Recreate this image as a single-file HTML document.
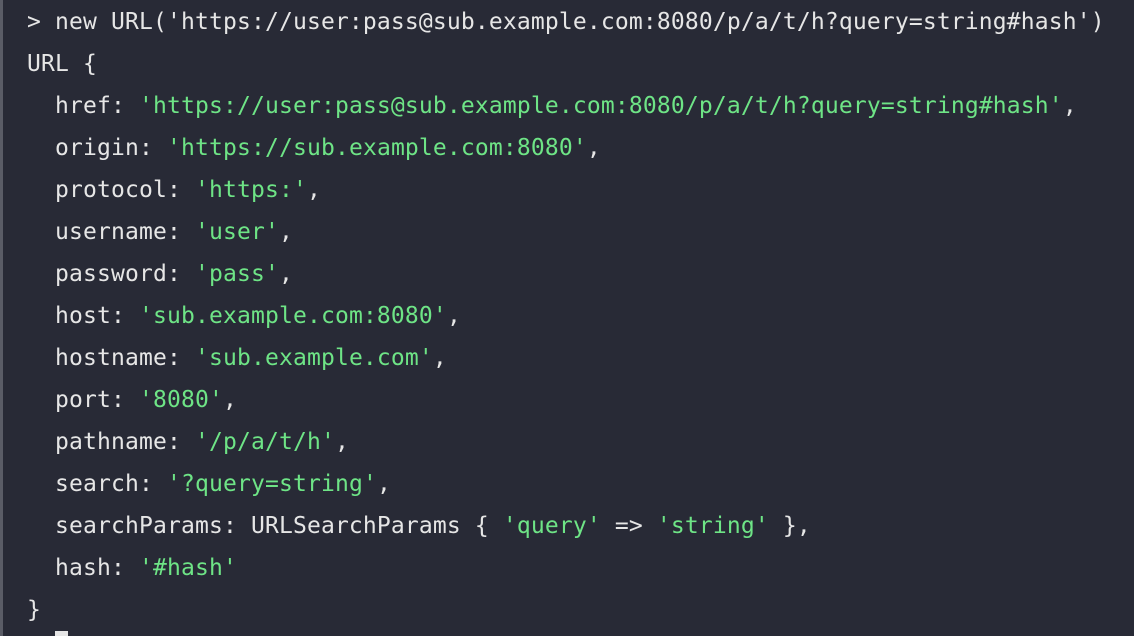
<!DOCTYPE html>
<html><head><meta charset="utf-8"><style>
html,body{margin:0;padding:0;width:1134px;height:636px;overflow:hidden;background:#282a36;}
.bar{position:absolute;left:0;top:0;width:3px;height:636px;background:#5a5c66;}
pre{position:absolute;left:27px;top:1px;margin:0;font-family:"DejaVu Sans Mono",monospace;font-size:23px;line-height:42px;color:#e6e6e6;letter-spacing:0.15px;}
.g{color:#6ee486;}
.cur{position:absolute;left:55px;top:631px;width:13px;height:5px;background:#e6e6e6;}
</style></head><body>
<div class="bar"></div>
<pre>&gt; new URL('https://user:pass@sub.example.com:8080/p/a/t/h?query=string#hash')
URL {
  href: <span class="g">'https://user:pass@sub.example.com:8080/p/a/t/h?query=string#hash'</span>,
  origin: <span class="g">'https://sub.example.com:8080'</span>,
  protocol: <span class="g">'https:'</span>,
  username: <span class="g">'user'</span>,
  password: <span class="g">'pass'</span>,
  host: <span class="g">'sub.example.com:8080'</span>,
  hostname: <span class="g">'sub.example.com'</span>,
  port: <span class="g">'8080'</span>,
  pathname: <span class="g">'/p/a/t/h'</span>,
  search: <span class="g">'?query=string'</span>,
  searchParams: URLSearchParams { <span class="g">'query'</span> =&gt; <span class="g">'string'</span> },
  hash: <span class="g">'#hash'</span>
}</pre>
<div class="cur"></div>
</body></html>
